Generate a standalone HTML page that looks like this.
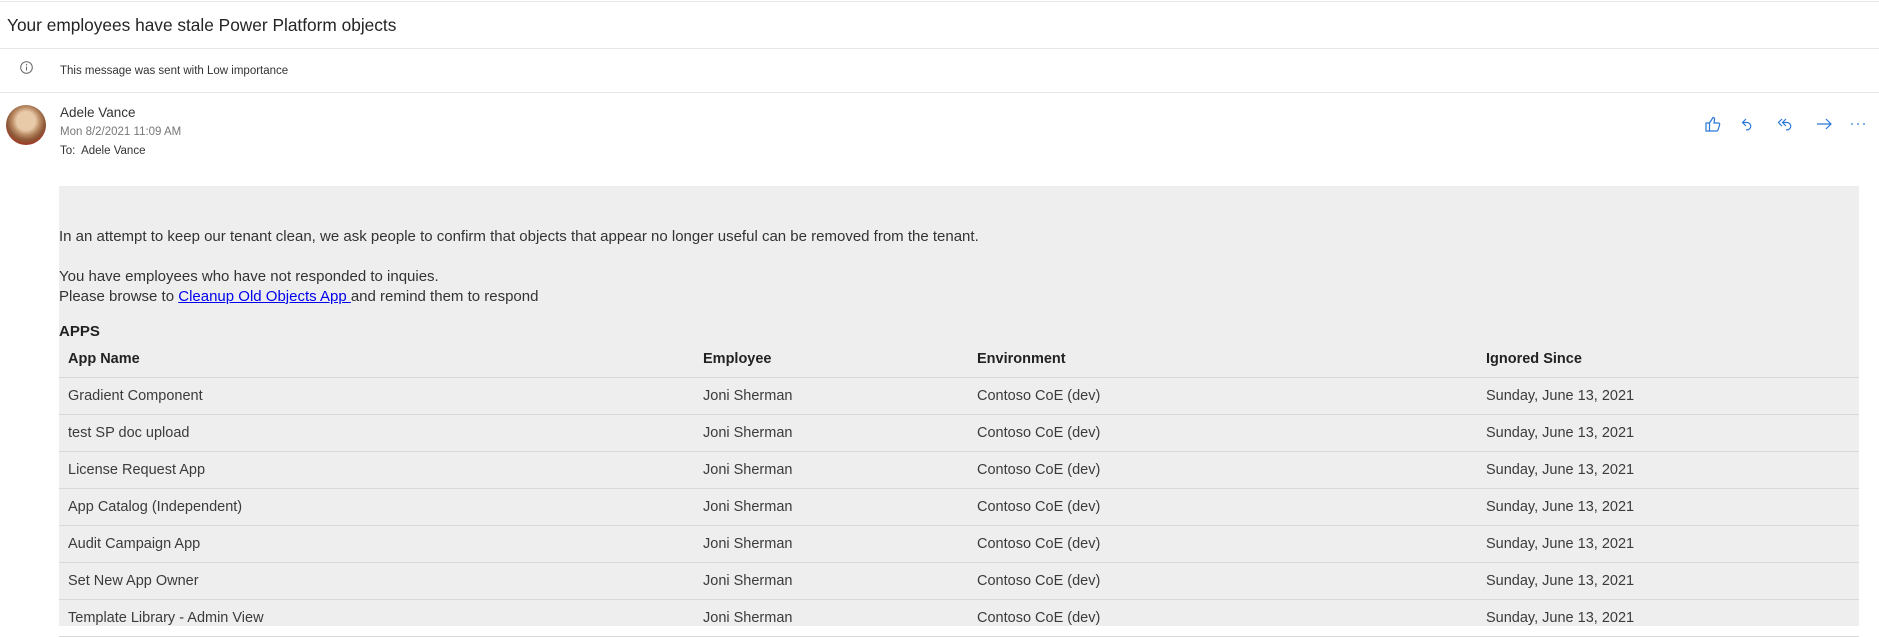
<!DOCTYPE html>
<html><head><meta charset="utf-8"><style>
*{margin:0;padding:0;box-sizing:border-box}
body{width:1879px;height:621px;overflow:hidden;background:#fff;font-family:"Liberation Sans",sans-serif;color:#323130;position:relative}
.a{position:absolute;white-space:nowrap}
.hl{position:absolute;left:0;width:1879px;height:1px;background:#e6e6e6}
.gray{position:absolute;left:59px;top:186px;width:1800px;height:440px;background:#eeeeee}
.t{font-size:15px;color:#333}
.row{position:absolute;left:59px;width:1800px;height:37px;border-bottom:1.5px solid #d9d9d9}
.row span{position:absolute;top:10px;font-size:14.5px;color:#3b3b3b}
.hd span{font-weight:bold;color:#222}
.c1{left:9px}.c2{left:644px}.c3{left:918px}.c4{left:1427px}
</style></head><body>
<div class="hl" style="top:1px"></div>
<div class="a" style="left:7px;top:15px;font-size:17.3px;color:#242424">Your employees have stale Power Platform objects</div>
<div class="hl" style="top:48px"></div>
<svg class="a" style="left:20px;top:61px" width="13" height="13" viewBox="0 0 13 13"><circle cx="6.5" cy="6.5" r="5.8" fill="none" stroke="#666" stroke-width="1"/><line x1="6.5" y1="5.5" x2="6.5" y2="9.5" stroke="#666"/><circle cx="6.5" cy="3.8" r=".7" fill="#666"/></svg>
<div class="a" style="left:60px;top:65px;font-size:11.5px;color:#333">This message was sent with Low importance</div>
<div class="hl" style="top:92px"></div>
<div class="a" style="left:6px;top:105px;width:40px;height:40px;border-radius:50%;background:radial-gradient(circle at 50% 40%,#e8c9a8 0 30%,#b98a63 45%,#8e5a3a 60%,#a0331f 80%)"></div>
<div class="a" style="left:60px;top:105px;font-size:13.5px;color:#333">Adele Vance</div>
<div class="a" style="left:60px;top:126px;font-size:11.5px;color:#777">Mon 8/2/2021 11:09 AM</div>
<div class="a" style="left:60px;top:145px;font-size:11.5px;color:#333">To:&nbsp; Adele Vance</div>
<svg class="a" style="left:1700px;top:112px" width="175" height="24" viewBox="0 0 175 24" fill="none" stroke="#2b79d6" stroke-width="1.2">
<path d="M6 11h3.5v8H6zM9.5 11l3.5-5.5c1.3 0 1.8 1 1.5 2.3L14 11h4.5c1 0 1.4.9 1.1 1.8l-1.6 5.2c-.3.7-.9 1-1.5 1H9.5"/>
<path d="M46 7l-3.5 3.5 3.5 3.5M42.5 10.5h4.5a3.7 3.7 0 0 1 0 7.4h-1"/>
<path d="M82 7l-3.5 3.5 3.5 3.5M86 7l-3.5 3.5 3.5 3.5M82.5 10.5h4.5a3.7 3.7 0 0 1 0 7.4h-1"/>
<path d="M117 12h14M126 7l5 5-5 5"/>
<circle cx="152" cy="12" r=".9" fill="#2b79d6" stroke="none"/><circle cx="158" cy="12" r=".9" fill="#2b79d6" stroke="none"/><circle cx="164" cy="12" r=".9" fill="#2b79d6" stroke="none"/>
</svg>
<div class="gray"></div>
<div class="a t" style="left:59px;top:228px">In an attempt to keep our tenant clean, we ask people to confirm that objects that appear no longer useful can be removed from the tenant.</div>
<div class="a t" style="left:59px;top:268px">You have employees who have not responded to inquies.</div>
<div class="a t" style="left:59px;top:288px">Please browse to <span style="color:#0000ee;text-decoration:underline">Cleanup Old Objects App </span>and remind them to respond</div>
<div class="a t" style="left:59px;top:323px;font-weight:bold;color:#222">APPS</div>
<div class="row hd" style="top:341px"><span class="c1">App Name</span><span class="c2">Employee</span><span class="c3">Environment</span><span class="c4">Ignored Since</span></div>
<div class="row" style="top:378px"><span class="c1">Gradient Component</span><span class="c2">Joni Sherman</span><span class="c3">Contoso CoE (dev)</span><span class="c4">Sunday, June 13, 2021</span></div>
<div class="row" style="top:415px"><span class="c1">test SP doc upload</span><span class="c2">Joni Sherman</span><span class="c3">Contoso CoE (dev)</span><span class="c4">Sunday, June 13, 2021</span></div>
<div class="row" style="top:452px"><span class="c1">License Request App</span><span class="c2">Joni Sherman</span><span class="c3">Contoso CoE (dev)</span><span class="c4">Sunday, June 13, 2021</span></div>
<div class="row" style="top:489px"><span class="c1">App Catalog (Independent)</span><span class="c2">Joni Sherman</span><span class="c3">Contoso CoE (dev)</span><span class="c4">Sunday, June 13, 2021</span></div>
<div class="row" style="top:526px"><span class="c1">Audit Campaign App</span><span class="c2">Joni Sherman</span><span class="c3">Contoso CoE (dev)</span><span class="c4">Sunday, June 13, 2021</span></div>
<div class="row" style="top:563px"><span class="c1">Set New App Owner</span><span class="c2">Joni Sherman</span><span class="c3">Contoso CoE (dev)</span><span class="c4">Sunday, June 13, 2021</span></div>
<div class="row" style="top:600px"><span class="c1">Template Library - Admin View</span><span class="c2">Joni Sherman</span><span class="c3">Contoso CoE (dev)</span><span class="c4">Sunday, June 13, 2021</span></div>
</body></html>
